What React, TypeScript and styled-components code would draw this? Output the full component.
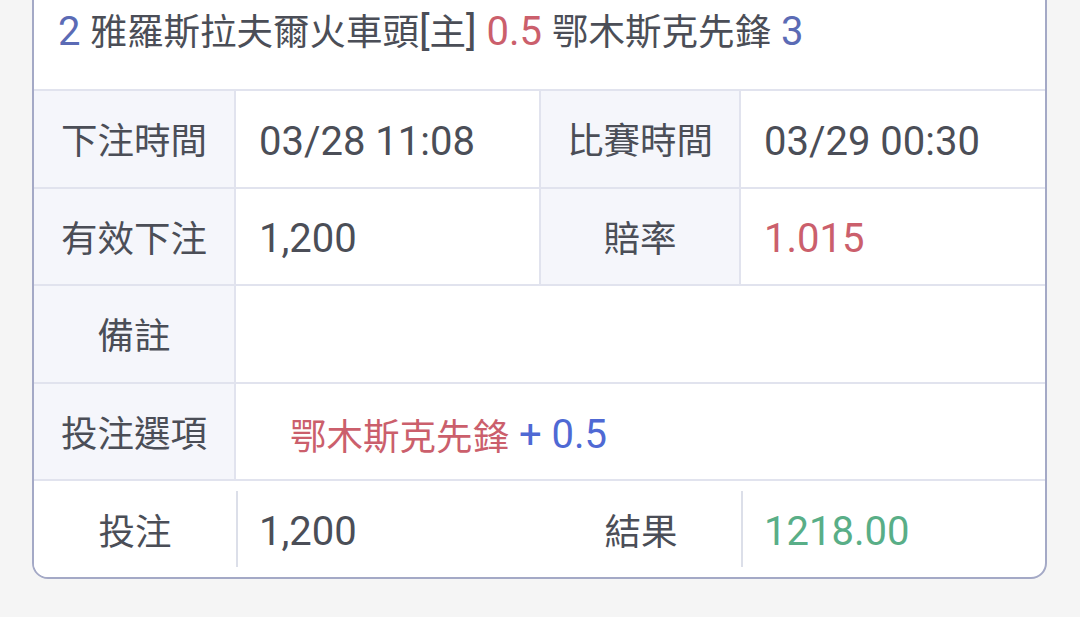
import React from 'react';
import styled, { createGlobalStyle } from 'styled-components';

const GlobalStyle = createGlobalStyle`
  html, body {
    margin: 0;
    padding: 0;
    background: #f5f5f5;
    overflow: hidden;
  }
  body {
    font-family: Roboto, "Noto Sans CJK TC", "Noto Sans", sans-serif;
    color: #4b4e57;
  }
`;

const Page = styled.div`
  width: 1080px;
  height: 617px;
  overflow: hidden;
`;

const Card = styled.div`
  margin: -20px 0 0 32px;
  width: 1015px;
  box-sizing: border-box;
  background: #fff;
  border: 2px solid #a4a9c6;
  border-radius: 0 0 16px 16px;
  overflow: hidden;
  font-size: 40px;
`;

// CJK glyphs render a bit smaller than the latin digits
const Han = styled.span`
  font-size: 36.5px;
`;

const Header = styled.div`
  height: 107px;
  box-sizing: border-box;
  padding: 26px 24px 0;
  line-height: 48px;
  white-space: nowrap;
`;

const Tone = styled.span<{ tone: 'blue' | 'red' | 'green' | 'accent' }>`
  color: ${({ tone }) =>
    tone === 'blue' ? '#5b6bb5' :
    tone === 'red' ? '#cb5f6c' :
    tone === 'green' ? '#59ae87' : '#4f69d4'};
`;

const Row = styled.div`
  display: grid;
  grid-template-columns: 202px 305px 200px 1fr;
  height: 97.6px;
  box-sizing: border-box;
  border-top: 2px solid #e1e3ee;
`;

const Label = styled.div<{ plain?: boolean }>`
  display: flex;
  align-items: center;
  justify-content: center;
  background: ${({ plain }) => (plain ? '#fff' : '#f5f6fb')};
  border-right: ${({ plain }) => (plain ? 'none' : '2px solid #e1e3ee')};
  font-size: 36.5px;
`;

const Value = styled.div<{ span?: number; indent?: number }>`
  display: flex;
  align-items: center;
  grid-column: span ${({ span }) => span || 1};
  padding: 5px 0 0 ${({ indent }) => indent ?? 23}px;
  border-right: ${({ span }) => (span ? 'none' : '2px solid #e1e3ee')};
  white-space: nowrap;
  &:last-child {
    border-right: none;
  }
`;

const FootValue = styled.div`
  display: flex;
  align-items: center;
  margin: 10px 0 10px;
  padding: 5px 0 0 21px;
  border-left: 2px solid #dcdfe9;
  white-space: nowrap;
`;

const App = () => {
  return (
    <Page>
      <GlobalStyle />
      <Card>
        <Header>
          <Tone tone="blue">2</Tone> <Han>雅羅斯拉夫爾火車頭</Han>[<Han>主</Han>] <Tone tone="red">0.5</Tone> <Han>鄂木斯克先鋒</Han> <Tone tone="blue">3</Tone>
        </Header>

        <Row>
          <Label>下注時間</Label>
          <Value>03/28 11:08</Value>
          <Label>比賽時間</Label>
          <Value>03/29 00:30</Value>
        </Row>

        <Row>
          <Label>有效下注</Label>
          <Value>1,200</Value>
          <Label>賠率</Label>
          <Value><Tone tone="red">1.015</Tone></Value>
        </Row>

        <Row>
          <Label>備註</Label>
          <Value span={3} />
        </Row>

        <Row>
          <Label>投注選項</Label>
          <Value span={3} indent={54}>
            <Tone tone="red"><Han>鄂木斯克先鋒</Han></Tone>&nbsp;<Tone tone="accent">+ 0.5</Tone>
          </Value>
        </Row>

        <Row>
          <Label plain>投注</Label>
          <FootValue>1,200</FootValue>
          <Label plain>結果</Label>
          <FootValue><Tone tone="green">1218.00</Tone></FootValue>
        </Row>
      </Card>
    </Page>
  );
};

export default App;
